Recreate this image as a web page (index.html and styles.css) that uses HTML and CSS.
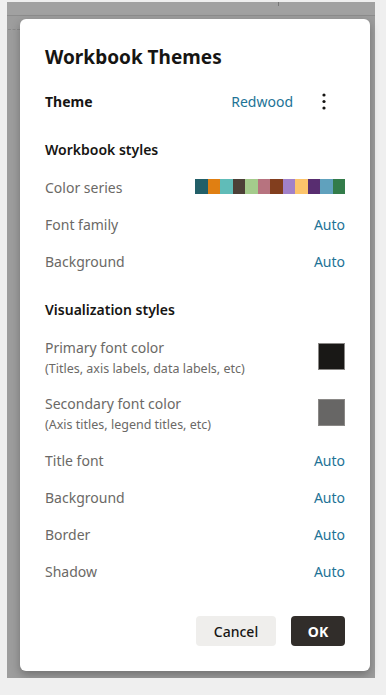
FILE: index.html
```html
<!DOCTYPE html>
<html lang="en">
<head>
  <meta charset="UTF-8">
  <title>Workbook Themes</title>
  <link rel="stylesheet" href="styles.css">
</head>
<body>
  <div class="backdrop">
    <div class="topbar"><span class="tick"></span></div>
    <div class="dash"></div>

    <div class="dialog">
      <div class="title">Workbook Themes</div>

      <div class="row theme-row">
        <span class="strong">Theme</span>
        <div class="theme-pick">
          <span class="link">Redwood</span>
          <svg class="kebab" width="16" height="20" viewBox="0 0 16 20">
            <circle cx="8" cy="4" r="1.6" fill="#161513"/>
            <circle cx="8" cy="10.5" r="1.6" fill="#161513"/>
            <circle cx="8" cy="17" r="1.6" fill="#161513"/>
          </svg>
        </div>
      </div>

      <div class="section">Workbook styles</div>
      <div class="row">
        <span class="label">Color series</span>
        <div class="swatches">
          <span style="background:#225f68"></span>
          <span style="background:#e07f12"></span>
          <span style="background:#60bcb8"></span>
          <span style="background:#4d4037"></span>
          <span style="background:#a4cb8c"></span>
          <span style="background:#b7737f"></span>
          <span style="background:#823e1e"></span>
          <span style="background:#a181c9"></span>
          <span style="background:#fcc46b"></span>
          <span style="background:#582d70"></span>
          <span style="background:#60a1bd"></span>
          <span style="background:#337c4a"></span>
        </div>
      </div>
      <div class="row">
        <span class="label">Font family</span>
        <span class="link">Auto</span>
      </div>
      <div class="row">
        <span class="label">Background</span>
        <span class="link">Auto</span>
      </div>

      <div class="section viz">Visualization styles</div>
      <div class="row tall">
        <div>
          <div class="label">Primary font color</div>
          <div class="hint">(Titles, axis labels, data labels, etc)</div>
        </div>
        <span class="chip chip-primary"></span>
      </div>
      <div class="row tall">
        <div>
          <div class="label">Secondary font color</div>
          <div class="hint">(Axis titles, legend titles, etc)</div>
        </div>
        <span class="chip chip-secondary"></span>
      </div>
      <div class="row">
        <span class="label">Title font</span>
        <span class="link">Auto</span>
      </div>
      <div class="row">
        <span class="label">Background</span>
        <span class="link">Auto</span>
      </div>
      <div class="row">
        <span class="label">Border</span>
        <span class="link">Auto</span>
      </div>
      <div class="row">
        <span class="label">Shadow</span>
        <span class="link">Auto</span>
      </div>

      <div class="actions">
        <button class="btn btn-cancel">Cancel</button>
        <button class="btn btn-ok">OK</button>
      </div>
    </div>
  </div>
</body>
</html>
```

FILE: styles.css
```css
body {
  margin: 0;
  background: #efefef;
  font-family: 'Noto Sans', 'Open Sans', sans-serif;
  color: #161513;
}

/* dimmed app behind the dialog */
.backdrop {
  position: relative;
  margin: 2px 0 0 7px;
  width: 368px;
  height: 676px;
  background: #9d9d9d;
}

.topbar {
  position: relative;
  height: 13px;
  background: #a1a1a1;
  border-bottom: 1px solid #8c8c8c;
}

.tick {
  position: absolute;
  left: 271px;
  top: 0;
  width: 1px;
  height: 4px;
  background: #777;
}

.dash {
  position: absolute;
  left: 1px;
  top: 27px;
  width: 12px;
  border-top: 1px dashed #8a8a8a;
}

.dialog {
  position: absolute;
  left: 13px;
  top: 17px;
  width: 350px;
  height: 652px;
  box-sizing: border-box;
  padding: 24px 25px 0;
  background: #fff;
  border-radius: 6px;
  box-shadow: 0 4px 10px rgba(0, 0, 0, 0.28);
}

.title {
  font-size: 19px;
  font-weight: 700;
  line-height: 28px;
}

.row {
  display: flex;
  align-items: center;
  justify-content: space-between;
  height: 37px;
  font-size: 14px;
}

.theme-row {
  height: 36px;
  margin-top: 12px;
}

.strong {
  font-weight: 700;
}

.theme-pick {
  display: flex;
  align-items: center;
  gap: 23px;
  margin-right: 13px;
}

.kebab {
  display: block;
}

.section {
  margin: 17px 0 5px;
  font-size: 14px;
  font-weight: 600;
  line-height: 28px;
}

.section.viz {
  margin: 16px 0 10px;
}

.label {
  color: #6b6966;
  line-height: 20px;
}

.hint {
  font-size: 12.5px;
  line-height: 22px;
  color: #6b6966;
}

.link {
  color: #1d7396;
}

.swatches {
  display: flex;
  height: 15px;
  margin-top: -2px;
}

.swatches span {
  width: 12.5px;
}

.tall {
  align-items: flex-start;
  height: 52px;
  padding-top: 4px;
  box-sizing: border-box;
}

.tall + .tall {
  margin-top: 4px;
}

.chip {
  width: 27px;
  height: 27px;
  margin-top: 5px;
  box-sizing: border-box;
  border: 1px solid #8a8886;
}

.chip-primary {
  background: #191816;
}

.chip-secondary {
  background: #676665;
}

.actions {
  display: flex;
  justify-content: flex-end;
  gap: 15px;
  margin-top: 26px;
}

.btn {
  height: 30px;
  border: none;
  border-radius: 4px;
  font-family: inherit;
  font-size: 14px;
  cursor: pointer;
}

.btn-cancel {
  width: 80px;
  background: #efeeec;
  color: #161513;
  font-weight: 500;
}

.btn-ok {
  width: 54px;
  background: #312d2a;
  color: #fff;
  font-weight: 700;
}
```
